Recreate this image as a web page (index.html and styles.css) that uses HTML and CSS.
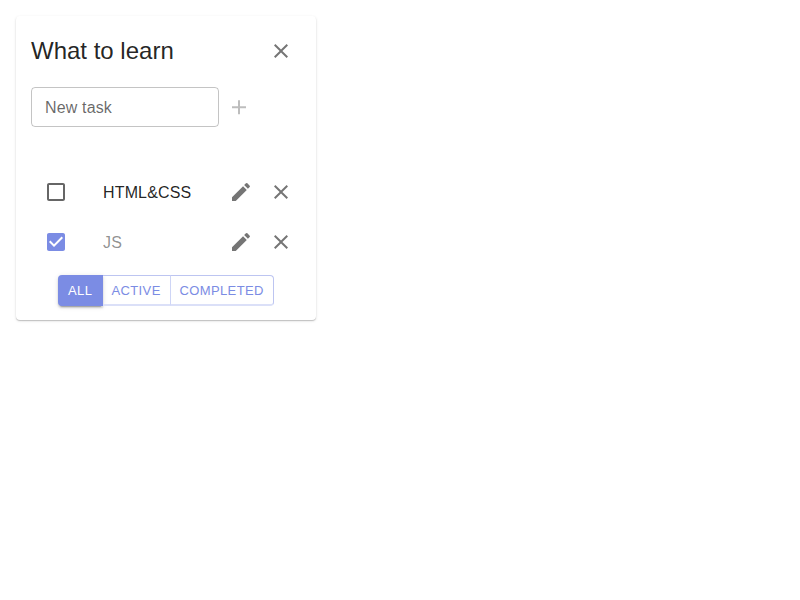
FILE: index.html
```html
<!DOCTYPE html>
<html lang="en">
<head>
<meta charset="utf-8">
<title>Todolist</title>
<link rel="stylesheet" href="styles.css">
</head>
<body>
<svg class="sprite" aria-hidden="true">
  <symbol id="close" viewBox="0 0 24 24"><path d="M19 6.41 17.59 5 12 10.59 6.41 5 5 6.41 10.59 12 5 17.59 6.41 19 12 13.41 17.59 19 19 17.59 13.41 12z"/></symbol>
  <symbol id="add" viewBox="0 0 24 24"><path transform="translate(0 .3)" d="M19 13h-6v6h-2v-6H5v-2h6V5h2v6h6v2z"/></symbol>
  <symbol id="edit" viewBox="0 0 24 24"><path d="M3 17.25V21h3.75L17.81 9.94l-3.75-3.75L3 17.25zM20.71 7.04c.39-.39.39-1.02 0-1.41l-2.34-2.34a.9959.9959 0 0 0-1.41 0l-1.83 1.83 3.75 3.75 1.83-1.83z"/></symbol>
  <symbol id="unchecked" viewBox="0 0 24 24"><path d="M19 5v14H5V5h14m0-2H5c-1.1 0-2 .9-2 2v14c0 1.1.9 2 2 2h14c1.1 0 2-.9 2-2V5c0-1.1-.9-2-2-2z"/></symbol>
  <symbol id="checked" viewBox="0 0 24 24"><path d="M19 3H5c-1.11 0-2 .9-2 2v14c0 1.1.89 2 2 2h14c1.11 0 2-.9 2-2V5c0-1.1-.89-2-2-2zm-9 14l-5-5 1.41-1.41L10 14.17l7.59-7.59L19 8l-9 9z"/></symbol>
</svg>
<main class="card">
  <header class="header">
    <h1 class="title">What to learn</h1>
    <button class="icon-button" aria-label="Delete list"><svg class="icon"><use href="#close"/></svg></button>
  </header>
  <div class="add-form">
    <input class="field" type="text" placeholder="New task">
    <button class="icon-button disabled" aria-label="Add task" disabled><svg class="icon"><use href="#add"/></svg></button>
  </div>
  <ul class="tasks">
    <li class="task">
      <span class="check"><svg class="icon"><use href="#unchecked"/></svg></span>
      <span class="task-title">HTML&amp;CSS</span>
      <button class="icon-button" aria-label="Edit"><svg class="icon"><use href="#edit"/></svg></button>
      <button class="icon-button" aria-label="Delete"><svg class="icon"><use href="#close"/></svg></button>
    </li>
    <li class="task done">
      <span class="check"><svg class="icon"><use href="#checked"/></svg></span>
      <span class="task-title">JS</span>
      <button class="icon-button" aria-label="Edit"><svg class="icon"><use href="#edit"/></svg></button>
      <button class="icon-button" aria-label="Delete"><svg class="icon"><use href="#close"/></svg></button>
    </li>
  </ul>
  <div class="filters">
    <button class="filter active">ALL</button>
    <button class="filter middle">ACTIVE</button>
    <button class="filter last">COMPLETED</button>
  </div>
</main>
</body>
</html>
```
FILE: styles.css
```css
* { box-sizing: border-box; }
body {
  margin: 0;
  padding: 16px;
  background: #fff;
  color: rgba(0, 0, 0, 0.87);
  font: 400 16px/1.5 "Liberation Sans", Arial, sans-serif;
  letter-spacing: 0.00938em;
}
.sprite { display: none; }
.card {
  width: 300px;
  height: 304px;
  padding: 15px;
  border-radius: 4px;
  background: #fff;
  box-shadow: 0 1px 1px 0 rgba(0, 0, 0, 0.18), 0 1px 3px 0 rgba(0, 0, 0, 0.12);
}
.header {
  display: flex;
  align-items: center;
  height: 40px;
}
.title {
  flex: none;
  width: 230px;
  margin: 0;
  font-size: 24px;
  font-weight: 400;
  line-height: 32px;
  letter-spacing: 0;
}
.icon-button, .check {
  display: flex;
  flex: none;
  align-items: center;
  justify-content: center;
  width: 40px;
  height: 40px;
  padding: 0;
  border: 0;
  background: none;
  color: rgba(0, 0, 0, 0.54);
}
.icon-button.disabled { color: rgba(0, 0, 0, 0.26); }
.icon {
  display: block;
  width: 24px;
  height: 24px;
  fill: currentColor;
}
.add-form {
  display: flex;
  margin-top: 16px;
}
.field {
  width: 188px;
  height: 40px;
  padding: 2px 13px 0;
  border: 1px solid rgba(0, 0, 0, 0.23);
  border-radius: 4px;
  background: none;
  font: inherit;
  letter-spacing: inherit;
}
.field::placeholder { color: rgba(0, 0, 0, 0.6); opacity: 1; }
.tasks {
  margin: 40px 0 0;
  padding: 0;
  list-style: none;
}
.task {
  display: flex;
  align-items: center;
  height: 50px;
}
.check {
  width: 50px;
  color: rgba(0, 0, 0, 0.6);
}
.task-title {
  width: 118px;
  margin-left: 22px;
  padding-top: 2px;
}
.done .check { color: #7b8ce4; }
.done .task-title { opacity: 0.5; }
.filters {
  display: flex;
  margin: 8px 0 0 27px;
}
.filter {
  height: 31px;
  margin: 0;
  padding: 1px 0 0 8.5px;
  border: 1px solid #bdc5f1;
  border-left: 0;
  border-bottom: 2px solid #dbe0f8;
  border-radius: 0;
  background: none;
  color: #7b8ce4;
  font: 400 13px/22px "Liberation Sans", Arial, sans-serif;
  letter-spacing: 0.02857em;
  text-align: left;
}
.middle { width: 68px; border-right-color: #ced5f6; }
.last { width: 103px; border-radius: 0 4px 4px 0; }
.filter.active {
  width: 45px;
  padding: 1px 0 0 10px;
  border: 0;
  border-radius: 4px 0 0 4px;
  background: #7b8ce4;
  color: #fff;
  box-shadow: 0 3px 1px -2px rgba(0, 0, 0, 0.2), 0 2px 2px 0 rgba(0, 0, 0, 0.14), 0 1px 5px 0 rgba(0, 0, 0, 0.12);
}
```
